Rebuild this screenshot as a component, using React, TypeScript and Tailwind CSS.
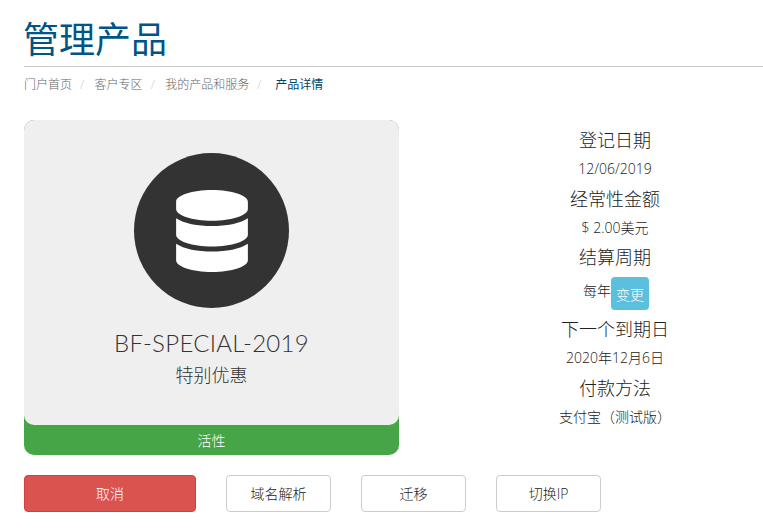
import { FaDatabase } from "react-icons/fa"

const crumbs = ["门户首页", "客户专区", "我的产品和服务"]

const details = [
  { label: "登记日期", value: "12/06/2019" },
  { label: "经常性金额", value: "$ 2.00美元" },
]

const details2 = [
  { label: "下一个到期日", value: "2020年12月6日" },
  { label: "付款方法", value: "支付宝（测试版）" },
]

const Detail = ({ label, value }: { label: string; value: string }) => (
  <>
    <h4 className="text-[18px] leading-[20px] text-[#222] mt-[9px] mb-[9px]">{label}</h4>
    <p className="text-[14px] leading-[20px] text-[#222] mb-[9.5px]">{value}</p>
  </>
)

const App = () => {
  return (
    <div className="w-[763px] h-[529px] overflow-hidden bg-white pl-6 font-light font-['Open_Sans','Noto_Sans_CJK_SC',sans-serif] text-[#222]">
      <div className="border-b border-[#ccc] pt-[18px] h-[67px]">
        <h1 className="text-[36px] leading-[44px] font-normal text-[#058] -ml-px">管理产品</h1>
      </div>

      <div className="flex items-center h-[20px] mt-2 text-[12px] text-[#666]">
        {crumbs.map((c) => (
          <span key={c} className="flex">
            {c}
            <span className="text-[#ccc] pl-[8px] pr-[10.5px]">/</span>
          </span>
        ))}
        <span className="text-[#004466] font-normal pl-[3.5px]">产品详情</span>
      </div>

      <div className="flex mt-[25px]">
        <div className="w-[375px] h-[335px] bg-[#46a546] rounded-[10px] flex flex-col">
          <div className="h-[305px] bg-[#efefef] rounded-[10px] flex flex-col items-center pt-[33px]">
            <div className="w-[155px] h-[155px] rounded-full bg-[#333] flex items-center justify-center">
              <FaDatabase className="w-[72px] h-[82px] text-white" />
            </div>
            <h3 className="mt-[18px] text-[24px] leading-[33px] font-light tracking-[0.3px] font-['Lato','Noto_Sans_CJK_SC',sans-serif] text-[#333]">
              BF-SPECIAL-2019
            </h3>
            <h4 className="mt-[3px] text-[18px] leading-[26px] text-[#333]">特别优惠</h4>
          </div>
          <div className="flex-1 flex items-center justify-center text-[14px] text-white">活性</div>
        </div>

        <div className="w-[296px] ml-[68px] text-center pt-[1px]">
          {details.map((d) => (
            <Detail key={d.label} label={d.label} value={d.value} />
          ))}
          <h4 className="text-[18px] leading-[20px] mt-[9px] mb-[10px]">结算周期</h4>
          <div className="flex items-center justify-center text-[14px] leading-[20px] mb-px ml-[2px]">
            <span className="mb-[5px]">每年</span>
            <span className="bg-[#5bc0de] text-white rounded-[4px] w-[38px] h-[33px] pt-[3px] flex items-center justify-center">变更</span>
          </div>
          {details2.map((d) => (
            <Detail key={d.label} label={d.label} value={d.value} />
          ))}
        </div>
      </div>

      <div className="flex gap-[30px] mt-5 text-[14px]">
        <button className="w-[172px] h-[37px] bg-[#d9534f] border border-[#d43f3a] rounded-[4px] text-white">取消</button>
        <button className="w-[105px] h-[37px] bg-white border border-[#ccc] rounded-[4px]">域名解析</button>
        <button className="w-[105px] h-[37px] bg-white border border-[#ccc] rounded-[4px]">迁移</button>
        <button className="w-[105px] h-[37px] bg-white border border-[#ccc] rounded-[4px]">切换IP</button>
      </div>
    </div>
  )
}

export default App
